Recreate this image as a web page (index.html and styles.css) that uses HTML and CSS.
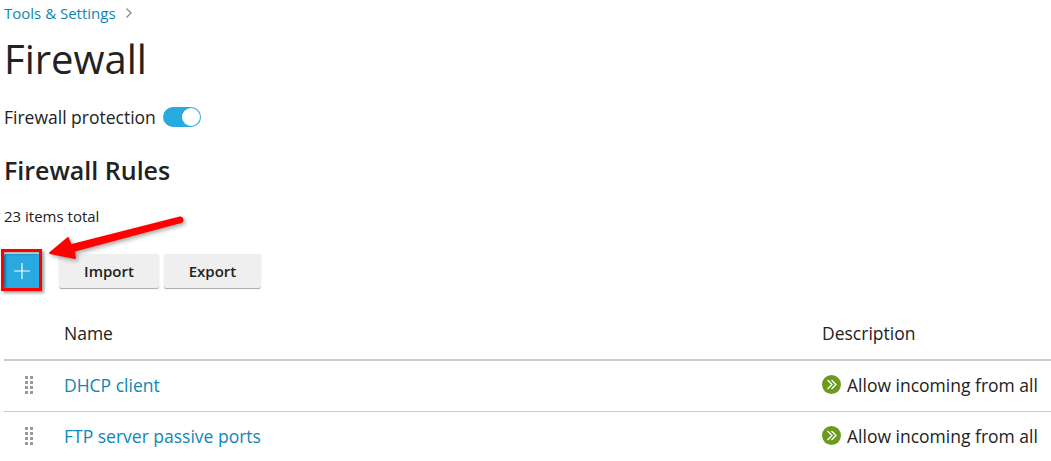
FILE: index.html
```html
<!DOCTYPE html>
<html lang="en">
<head>
<meta charset="utf-8">
<title>Firewall</title>
<link rel="stylesheet" href="styles.css">
</head>
<body>
<main class="page">
  <nav class="breadcrumb"><a href="#">Tools &amp; Settings</a>
    <svg class="crumb-chevron" width="8" height="12" viewBox="0 0 8 12"><path d="M1.500 1.500 6 6l-4.500 4.500" fill="none" stroke="#8a8a8a" stroke-width="1.300"/></svg>
  </nav>
  <h1 class="title">Firewall</h1>
  <div class="protection"><span>Firewall protection</span><span class="toggle"><span class="knob"></span></span></div>
  <h2 class="subtitle">Firewall Rules</h2>
  <p class="total">23 items total</p>
  <div class="toolbar">
    <button class="btn add" aria-label="Add">
      <svg width="16" height="16" viewBox="0 0 16 16"><path d="M8 0v16M0 8h16" stroke="#fff" stroke-width="1.200"/></svg>
    </button>
    <button class="btn">Import</button>
    <button class="btn">Export</button>
  </div>
  <div class="table">
    <div class="row head"><span></span><span>Name</span><span>Description</span></div>
    <div class="row">
      <svg class="grip" width="8" height="18" viewBox="0 0 8 18"><g fill="#9a9a9a"><rect x="0" y="0" width="3" height="3"/><rect x="5" y="0" width="3" height="3"/><rect x="0" y="5" width="3" height="3"/><rect x="5" y="5" width="3" height="3"/><rect x="0" y="10" width="3" height="3"/><rect x="5" y="10" width="3" height="3"/><rect x="0" y="15" width="3" height="3"/><rect x="5" y="15" width="3" height="3"/></g></svg>
      <a href="#">DHCP client</a>
      <span class="desc"><svg width="19" height="19" viewBox="0 0 19 19"><circle cx="9.500" cy="9.500" r="9.500" fill="#6b9a1f"/><path d="M5.500 5 10 9.500 5.500 14M9.500 5 14 9.500 9.500 14" fill="none" stroke="#fff" stroke-width="1.300"/></svg>Allow incoming from all</span>
    </div>
    <div class="row">
      <svg class="grip" width="8" height="18" viewBox="0 0 8 18"><g fill="#9a9a9a"><rect x="0" y="0" width="3" height="3"/><rect x="5" y="0" width="3" height="3"/><rect x="0" y="5" width="3" height="3"/><rect x="5" y="5" width="3" height="3"/><rect x="0" y="10" width="3" height="3"/><rect x="5" y="10" width="3" height="3"/><rect x="0" y="15" width="3" height="3"/><rect x="5" y="15" width="3" height="3"/></g></svg>
      <a href="#">FTP server passive ports</a>
      <span class="desc"><svg width="19" height="19" viewBox="0 0 19 19"><circle cx="9.500" cy="9.500" r="9.500" fill="#6b9a1f"/><path d="M5.500 5 10 9.500 5.500 14M9.500 5 14 9.500 9.500 14" fill="none" stroke="#fff" stroke-width="1.300"/></svg>Allow incoming from all</span>
    </div>
  </div>
</main>
<div class="highlight"></div>
<svg class="arrow" width="150" height="60" viewBox="0 0 150 60"><path d="M2 41 20 26 23 33 131 5.500Q134 5 134.500 7.500T132 10.500L26 39 27 46z" fill="#f00" stroke="#f00" stroke-width="1.800" stroke-linejoin="round"/></svg>
</body>
</html>
```
FILE: styles.css
```css
html, body { margin: 0; padding: 0; background: #fff; overflow: hidden; }
body { width: 1051px; height: 461px; position: relative; font-family: "Open Sans", sans-serif; color: #222; }
a { color: #0f86b6; text-decoration: none; }
.page { padding-left: 4px; }
.breadcrumb { display: flex; align-items: center; gap: 9px; height: 26px; font-size: 15px; }
.title { margin: 7px 0 0; font-size: 40px; line-height: 52px; font-weight: 400; }
.protection { display: flex; align-items: center; gap: 7px; margin-top: 19px; height: 26px; font-size: 17.500px; }
.toggle { display: flex; justify-content: flex-end; align-items: center; width: 38px; height: 20px; padding: 1px; box-sizing: border-box; border-radius: 10px; background: #28a9e0; }
.knob { width: 18px; height: 18px; border-radius: 50%; background: #fff; }
.subtitle { margin: 24px 0 0; font-size: 25px; line-height: 32px; font-weight: 600; }
.total { margin: 20px 0 0; font-size: 15px; line-height: 20px; }
.toolbar { display: flex; align-items: flex-end; gap: 5px; margin-top: 28px; height: 34px; }
.btn { width: 100px; height: 34px; padding: 0; border: 0; border-radius: 2px; background: #efefef; box-shadow: 0 1px 1px #aaa; font: 600 15px "Open Sans", sans-serif; color: #222; }
.btn:last-child { width: 97px; }
.btn.add { display: flex; align-items: center; justify-content: center; width: 36px; margin-right: 14px; background: #28a9e0; }
.table { margin-top: 26px; }
.row { display: grid; grid-template-columns: 60px 758px 1fr; align-items: center; height: 47px; padding-bottom: 3px; border-bottom: 1px solid #ccc; font-size: 17.500px; }
.row.head { height: 37px; padding-bottom: 8px; border-bottom: 2px solid #ccc; }
.grip { margin-left: 21px; }
.desc { display: flex; align-items: center; gap: 6px; white-space: nowrap; }
.row:last-child { border-bottom: 0; }
.highlight { position: absolute; left: 1px; top: 249px; width: 35px; height: 36px; border: 3px solid #f00; box-shadow: 2px 2px 3px rgba(0,0,0,.4), inset 2px 2px 2px rgba(0,0,0,.3); }
.arrow { position: absolute; left: 48px; top: 212px; filter: drop-shadow(2px 2px 2px rgba(0,0,0,.35)); }
```
